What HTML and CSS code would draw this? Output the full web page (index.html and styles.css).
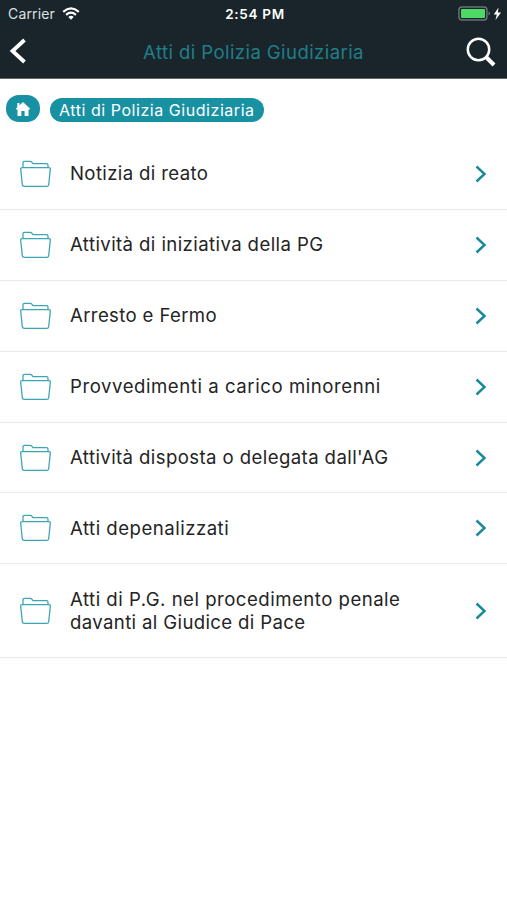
FILE: index.html
```html
<!DOCTYPE html>
<html lang="it">
<head>
<meta charset="utf-8">
<meta name="viewport" content="width=device-width">
<title>Atti di Polizia Giudiziaria</title>
<link rel="stylesheet" href="styles.css">
</head>
<body>
<svg class="defs" aria-hidden="true">
  <symbol id="folder" viewBox="0 0 32 28"><path d="M3 7.6V2.8Q3 1.3 4.5 1.3H10.2Q11.3 1.3 12 2.3L13 3.7H26.5Q28 3.7 28 5.2V7.6M2.3 7.6H28.7Q30.5 7.6 30.3 9.3L28.7 24.7Q28.5 26.4 26.7 26.4H4.3Q2.5 26.4 2.3 24.7L.7 9.3Q.5 7.6 2.3 7.6Z"/></symbol>
  <symbol id="chevron" viewBox="0 0 12 18"><path d="M1.5 1.5L9.5 9L1.5 16.5"/></symbol>
</svg>
<header class="header">
  <div class="status">
    <div class="carrier"><span>Carrier</span>
      <svg class="wifi" viewBox="0 0 18 13"><path d="M1.2 4.8Q9-2 16.8 4.8M4.1 7.8Q9 3.6 13.9 7.8"/><path class="solid" d="M6.3 9.9Q9 7.7 11.7 9.9L9 12.7Z"/></svg>
    </div>
    <div class="time">2:54 PM</div>
    <div class="power">
      <svg class="battery" viewBox="0 0 44 16"><rect class="shell" x=".9" y="1" width="28" height="13" rx="3"/><rect class="charge" x="3" y="3" width="24" height="9" rx="1"/><path class="cap" d="M30.5 5.5Q32 6 32 7.5T30.5 9.5Z"/><path class="bolt" d="M40.5 1.5L35.8 8.5H38.8L37.5 14L43 6.5H39.8Z"/></svg>
    </div>
  </div>
  <nav class="bar">
    <svg class="back" viewBox="0 0 18 26"><path d="M15.5 2L3.5 13L15.5 24"/></svg>
    <h1 class="title">Atti di Polizia Giudiziaria</h1>
    <svg class="search" viewBox="0 0 30 30"><circle cx="12.5" cy="12.5" r="10.7"/><path class="handle" d="M20 20L28 28"/></svg>
  </nav>
</header>
<div class="crumbs">
  <a class="home"><svg viewBox="0 0 16 16"><path d="M8 1L4.5 4.2V2H2.3V6.2L.8 7.8L1.8 8.8L2.5 8.2V15H6.4V10H9.6V15H13.5V8.2L14.2 8.8L15.2 7.8Z"/></svg></a>
  <a class="crumb">Atti di Polizia Giudiziaria</a>
</div>
<main class="list">
  <a class="row"><svg class="folder"><use href="#folder"/></svg><p class="label"><span class="snug">Notizia di reato</span></p><svg class="chevron"><use href="#chevron"/></svg></a>
  <a class="row"><svg class="folder"><use href="#folder"/></svg><p class="label"><span>Attività di iniziativa della PG</span></p><svg class="chevron"><use href="#chevron"/></svg></a>
  <a class="row"><svg class="folder"><use href="#folder"/></svg><p class="label"><span class="snug">Arresto e Fermo</span></p><svg class="chevron"><use href="#chevron"/></svg></a>
  <a class="row"><svg class="folder"><use href="#folder"/></svg><p class="label"><span class="widest">Provvedimenti a carico minorenni</span></p><svg class="chevron"><use href="#chevron"/></svg></a>
  <a class="row"><svg class="folder"><use href="#folder"/></svg><p class="label"><span>Attività disposta o delegata dall'AG</span></p><svg class="chevron"><use href="#chevron"/></svg></a>
  <a class="row"><svg class="folder"><use href="#folder"/></svg><p class="label"><span class="wide">Atti depenalizzati</span></p><svg class="chevron"><use href="#chevron"/></svg></a>
  <a class="row tall"><svg class="folder"><use href="#folder"/></svg><p class="label"><span class="wide">Atti di P.G. nel procedimento penale</span><br><span class="snug">davanti al Giudice di Pace</span></p><svg class="chevron"><use href="#chevron"/></svg></a>
</main>
</body>
</html>
```
FILE: styles.css
```css
* { box-sizing: border-box; }
body { margin: 0; background: #fff; color: #242424; font-family: Inter, "Liberation Sans", sans-serif; }
svg { display: block; flex: none; fill: none; }
.defs { position: absolute; width: 0; height: 0; }
.header { height: 79px; background: #19252a; border-bottom: 1px solid #59666a; color: #fff; }
.status { display: grid; grid-template-columns: 1fr auto 1fr; align-items: center; height: 27px; padding: 0 5px 0 8px; font-size: 14px; }
.carrier { display: flex; align-items: center; gap: 7px; color: #dce1e3; letter-spacing: .15px; }
.wifi { width: 18px; height: 13px; stroke: #fff; stroke-width: 2.2; }
.wifi .solid { fill: #fff; stroke: none; }
.time { font-size: 13.5px; font-weight: 600; letter-spacing: .7px; }
.power { display: flex; justify-content: flex-end; }
.battery { width: 44px; height: 16px; }
.shell { stroke: #697276; stroke-width: 1.5; }
.charge { fill: #4cd964; }
.cap { fill: #697276; }
.bolt { fill: #fff; }
.bar { display: flex; align-items: center; justify-content: space-between; height: 50px; padding: 0 11px 0 9px; }
.back { width: 18px; height: 26px; margin-top: -2px; stroke: #fff; stroke-width: 3.8; }
.title { margin: 0 0 0 14px; color: #207e88; font-size: 18.6px; font-weight: 400; letter-spacing: .4px; }
.search { width: 30px; height: 30px; stroke: #fff; stroke-width: 2.5; }
.handle { stroke-width: 4; }
.crumbs { display: flex; align-items: center; gap: 10px; height: 60px; padding: 0 6px 1px; }
.home { display: flex; align-items: center; justify-content: center; width: 34px; height: 27px; border-radius: 13px; background: #1891a3; }
.home svg { width: 16px; height: 16px; fill: #fff; }
.crumb { height: 24px; margin-top: 3px; padding: 1px 9px 0; border-radius: 12px; background: #1891a3; color: #fff; font-size: 16px; line-height: 23px; letter-spacing: .55px; }
.row { display: flex; align-items: center; height: 70.9px; padding: 0 20px; border-bottom: 1px solid #e9e9e9; }
.row.tall { height: 94px; }
.folder { width: 32px; height: 28px; stroke: #3da6b5; stroke-width: 1.3; }
.label { flex: 1; margin: 0 0 0 18px; font-size: 18.6px; line-height: 23px; letter-spacing: .4px; white-space: nowrap; }
.snug { letter-spacing: .36px; }
.wide { letter-spacing: .49px; }
.widest { letter-spacing: .55px; }
.chevron { width: 12px; height: 18px; stroke: #18899a; stroke-width: 2.4; }
```
